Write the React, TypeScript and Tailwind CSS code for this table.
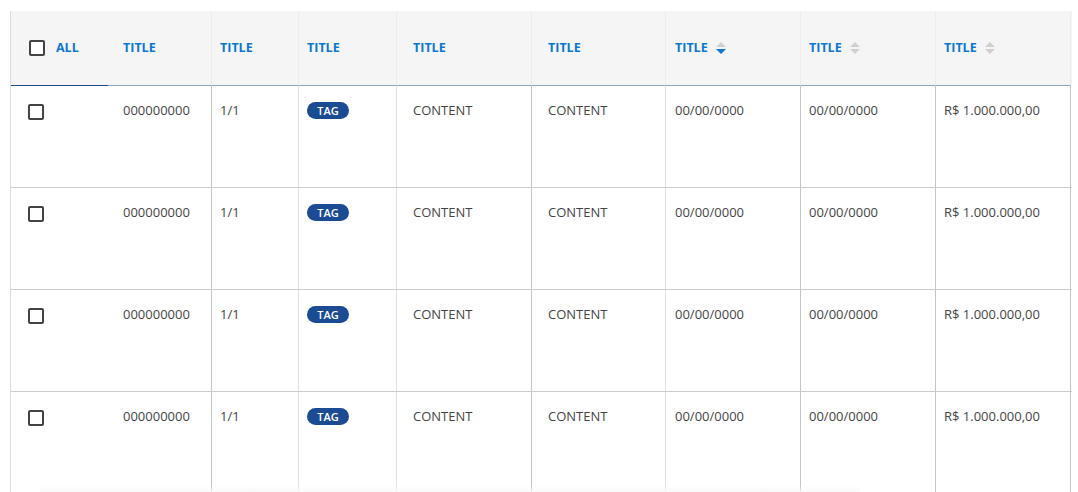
import React from "react";

const cols = "grid-cols-[97px_104px_87px_98px_135px_134px_135px_135px_135px]";

function SortIcon({ active }: { active?: boolean }) {
  return (
    <svg width="10" height="13" viewBox="0 0 10 13" className="ml-[8px]">
      <path d="M5 0 L10 5 L0 5 Z" fill="#cfcfcf" />
      <path d="M0 7 L10 7 L5 12 Z" fill={active ? "#0a78d2" : "#cfcfcf"} />
    </svg>
  );
}

function Checkbox() {
  return <div className="w-[16px] h-[16px] border-2 border-[#444] rounded-[2px] bg-white" />;
}

const headerPads = ["", "pl-[15px]", "pl-[8px]", "pl-[8px]", "pl-[16px]", "pl-[16px]", "pl-[9px]", "pl-[8px]", "pl-[8px]"];
const bodyRight = [
  "",
  "border-r border-[#c4c4c4]",
  "border-r border-[#e0e0e0]",
  "border-r border-[#e0e0e0]",
  "border-r border-[#c4c4c4]",
  "border-r border-[#e0e0e0]",
  "border-r border-[#c4c4c4]",
  "border-r border-[#c4c4c4]",
  "border-r border-[#c4c4c4]",
];

function Row() {
  const cell = "pt-[15px] text-[13px] leading-[18px] text-[#444]";
  return (
    <div className={`grid ${cols} h-[102px] border-b border-[#cdcdcd]`}>
      <div className="pl-[17px] pt-[18px]">
        <Checkbox />
      </div>
      <div className={`${cell} pl-[15px] ${bodyRight[1]}`}>000000000</div>
      <div className={`${cell} pl-[8px] ${bodyRight[2]}`}>1/1</div>
      <div className={`flex items-start pt-[16px] pl-[8px] ${bodyRight[3]}`}>
        <span className="flex items-center justify-center w-[42px] h-[17px] rounded-full bg-[#1b4b93] text-white text-[11px] font-semibold leading-none">
          TAG
        </span>
      </div>
      <div className={`${cell} pl-[16px] ${bodyRight[4]}`}>CONTENT</div>
      <div className={`${cell} pl-[16px] ${bodyRight[5]}`}>CONTENT</div>
      <div className={`${cell} pl-[9px] ${bodyRight[6]}`}>00/00/0000</div>
      <div className={`${cell} pl-[8px] ${bodyRight[7]}`}>00/00/0000</div>
      <div className={`${cell} pl-[8px] ${bodyRight[8]}`}>R$ 1.000.000,00</div>
    </div>
  );
}

export default function App() {
  return (
    <div
      className="w-[1078px] h-[492px] overflow-hidden bg-white relative"
      style={{ fontFamily: '"Open Sans", "Noto Sans", sans-serif' }}
    >
      <div className="ml-[10px] mt-[11px] w-[1062px] border-l border-[#dcdcdc]">
        <div className={`grid ${cols} h-[75px] bg-[#f5f5f5]`}>
          {Array.from({ length: 9 }).map((_, i) => {
            const borderB = i === 0 ? "border-b border-b-[#1d4b8f]" : "border-b border-b-[#8fa5c4]";
            const borderR = i > 0 ? "border-r border-r-[#ececec]" : "";
            if (i === 0) {
              return (
                <div key={i} className={`flex items-center pl-[18px] ${borderB}`}>
                  <Checkbox />
                  <span className="ml-[11px] text-[12.5px] font-bold text-[#0a78d2]">ALL</span>
                </div>
              );
            }
            return (
              <div key={i} className={`flex items-center ${headerPads[i]} ${borderB} ${borderR}`}>
                <span className="text-[12.5px] font-bold text-[#0a78d2]">TITLE</span>
                {i >= 6 && <SortIcon active={i === 6} />}
              </div>
            );
          })}
        </div>
        <Row />
        <Row />
        <Row />
        <Row />
      </div>
      <div className="absolute left-[40px] bottom-0 w-[820px] h-[6px] bg-gradient-to-t from-[#f8f8f8] to-transparent" />
    </div>
  );
}
